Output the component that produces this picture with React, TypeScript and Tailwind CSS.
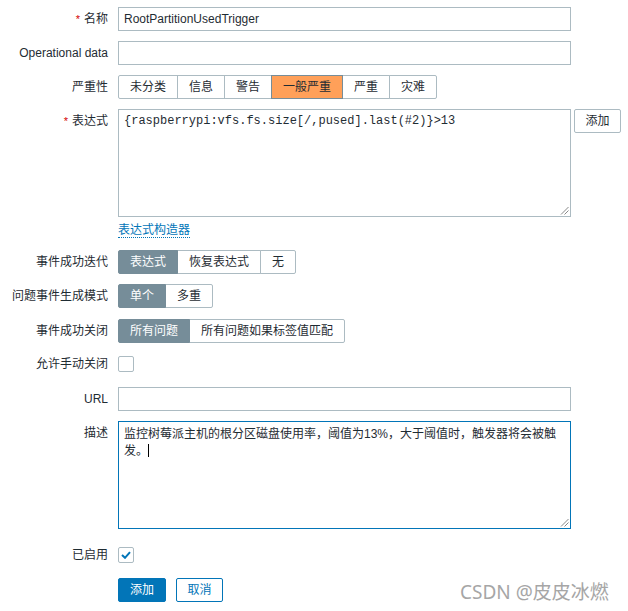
import React from "react";

const FONT = "font-['Liberation_Sans','Noto_Sans_CJK_SC',sans-serif]";

function Label({ text, required }: { text: string; required?: boolean }) {
  return (
    <div className="w-[108px] shrink-0 text-right leading-[24px] text-[#1f2c33] whitespace-nowrap">
      {required && <span className="text-[#d40000] mr-[4px] text-[11px]">*</span>}
      {text}
    </div>
  );
}

function Row({ label, required, className, children }: { label: string; required?: boolean; className?: string; children: React.ReactNode }) {
  return (
    <div className={`flex items-start ${className ?? ""}`}>
      <Label text={label} required={required} />
      <div className="ml-[10px] flex items-start">{children}</div>
    </div>
  );
}

function TextInput({ value }: { value?: string }) {
  return (
    <div className="w-[453px] h-[24px] border border-[#acbbc2] bg-white px-[5px] leading-[22px] text-[#1f2c33]">
      {value}
    </div>
  );
}

function ResizeGrip() {
  return (
    <svg className="absolute right-[1px] bottom-[1px]" width="9" height="9" viewBox="0 0 9 9">
      <line x1="8.5" y1="1" x2="1" y2="8.5" stroke="#888" strokeWidth="1" />
      <line x1="8.5" y1="4.5" x2="4.5" y2="8.5" stroke="#888" strokeWidth="1" />
    </svg>
  );
}

function Segmented({
  items,
  selected,
  selectedClass,
}: {
  items: string[];
  selected: number;
  selectedClass: string;
}) {
  return (
    <div className="flex">
      {items.map((it, i) => {
        const isSel = i === selected;
        const first = i === 0;
        const last = i === items.length - 1;
        return (
          <div
            key={it}
            className={`h-[24px] px-[11px] border leading-[22px] whitespace-nowrap ${first ? "rounded-l-[2px]" : "-ml-px"} ${
              last ? "rounded-r-[2px]" : ""
            } ${isSel ? selectedClass + " relative z-10" : "bg-white border-[#acbbc2] text-[#1f2c33]"}`}
          >
            {it}
          </div>
        );
      })}
    </div>
  );
}

function Checkbox({ checked }: { checked?: boolean }) {
  return (
    <div className="mt-[4px] w-[16px] h-[16px] border border-[#acbbc2] rounded-[2px] bg-white flex items-center justify-center">
      {checked && (
        <svg width="10" height="8" viewBox="0 0 10 8">
          <path d="M1 4 L4 6.8 L9 1.2" fill="none" stroke="#0275b8" strokeWidth="2" />
        </svg>
      )}
    </div>
  );
}

export default function App() {
  return (
    <div className={`relative w-[628px] h-[611px] bg-white text-[12px] ${FONT} pt-[7px]`}>
      <Row label="名称" required>
        <TextInput value="RootPartitionUsedTrigger" />
      </Row>

      <Row label="Operational data" className="mt-[10px]">
        <TextInput />
      </Row>

      <Row label="严重性" className="mt-[10px]">
        <Segmented
          items={["未分类", "信息", "警告", "一般严重", "严重", "灾难"]}
          selected={3}
          selectedClass="bg-[#ffa059] border-[#768d99] text-[#1f2c33]"
        />
      </Row>

      <Row label="表达式" required className="mt-[10px]">
        <div className="flex flex-col items-start">
          <div className="relative w-[453px] h-[108px] border border-[#acbbc2] bg-white px-[5px] pt-[4px] font-['Liberation_Mono',monospace] leading-[14px] text-[#1f2c33]">
            {"{raspberrypi:vfs.fs.size[/,pused].last(#2)}>13"}
            <ResizeGrip />
          </div>
          <span className="mt-[6px] leading-[14px] text-[#0275b8] border-b border-dotted border-[#0275b8]">
            表达式构造器
          </span>
        </div>
        <button className="ml-[3px] h-[24px] w-[47px] border border-[#acbbc2] rounded-[2px] bg-white text-[#1f2c33] leading-[22px]">
          添加
        </button>
      </Row>

      <Row label="事件成功迭代" className="mt-[12px]">
        <Segmented
          items={["表达式", "恢复表达式", "无"]}
          selected={0}
          selectedClass="bg-[#768d99] border-[#768d99] text-white"
        />
      </Row>

      <Row label="问题事件生成模式" className="mt-[10px]">
        <Segmented items={["单个", "多重"]} selected={0} selectedClass="bg-[#768d99] border-[#768d99] text-white" />
      </Row>

      <Row label="事件成功关闭" className="mt-[11px]">
        <Segmented
          items={["所有问题", "所有问题如果标签值匹配"]}
          selected={0}
          selectedClass="bg-[#768d99] border-[#768d99] text-white"
        />
      </Row>

      <Row label="允许手动关闭" className="mt-[9px]">
        <Checkbox />
      </Row>

      <Row label="URL" className="mt-[11px]">
        <TextInput />
      </Row>

      <Row label="描述" className="mt-[10px]">
        <div className="relative w-[453px] h-[108px] border border-[#0275b8] bg-white px-[5px] pt-[4px] leading-[17px] text-[#1f2c33]">
          监控树莓派主机的根分区磁盘使用率，阈值为13%，大于阈值时，触发器将会被触
          <br />
          发。
          <span className="inline-block w-px h-[13px] bg-black align-[-2px]" />
          <ResizeGrip />
        </div>
      </Row>

      <Row label="已启用" className="mt-[14px]">
        <Checkbox checked />
      </Row>

      <div className="flex mt-[11px] ml-[118px] gap-[10px]">
        <button className="h-[24px] w-[48px] rounded-[2px] bg-[#0275b8] border border-[#0275b8] text-white leading-[22px]">
          添加
        </button>
        <button className="h-[24px] w-[47px] rounded-[2px] bg-white border border-[#0275b8] text-[#0275b8] leading-[22px]">
          取消
        </button>
      </div>

      <div className="absolute left-[460px] top-[580px] text-[19px] leading-[24px] text-[#a6a6a6] font-['Noto_Sans','Noto_Sans_CJK_SC',sans-serif] whitespace-nowrap">
        CSDN @皮皮冰燃
      </div>
    </div>
  );
}
